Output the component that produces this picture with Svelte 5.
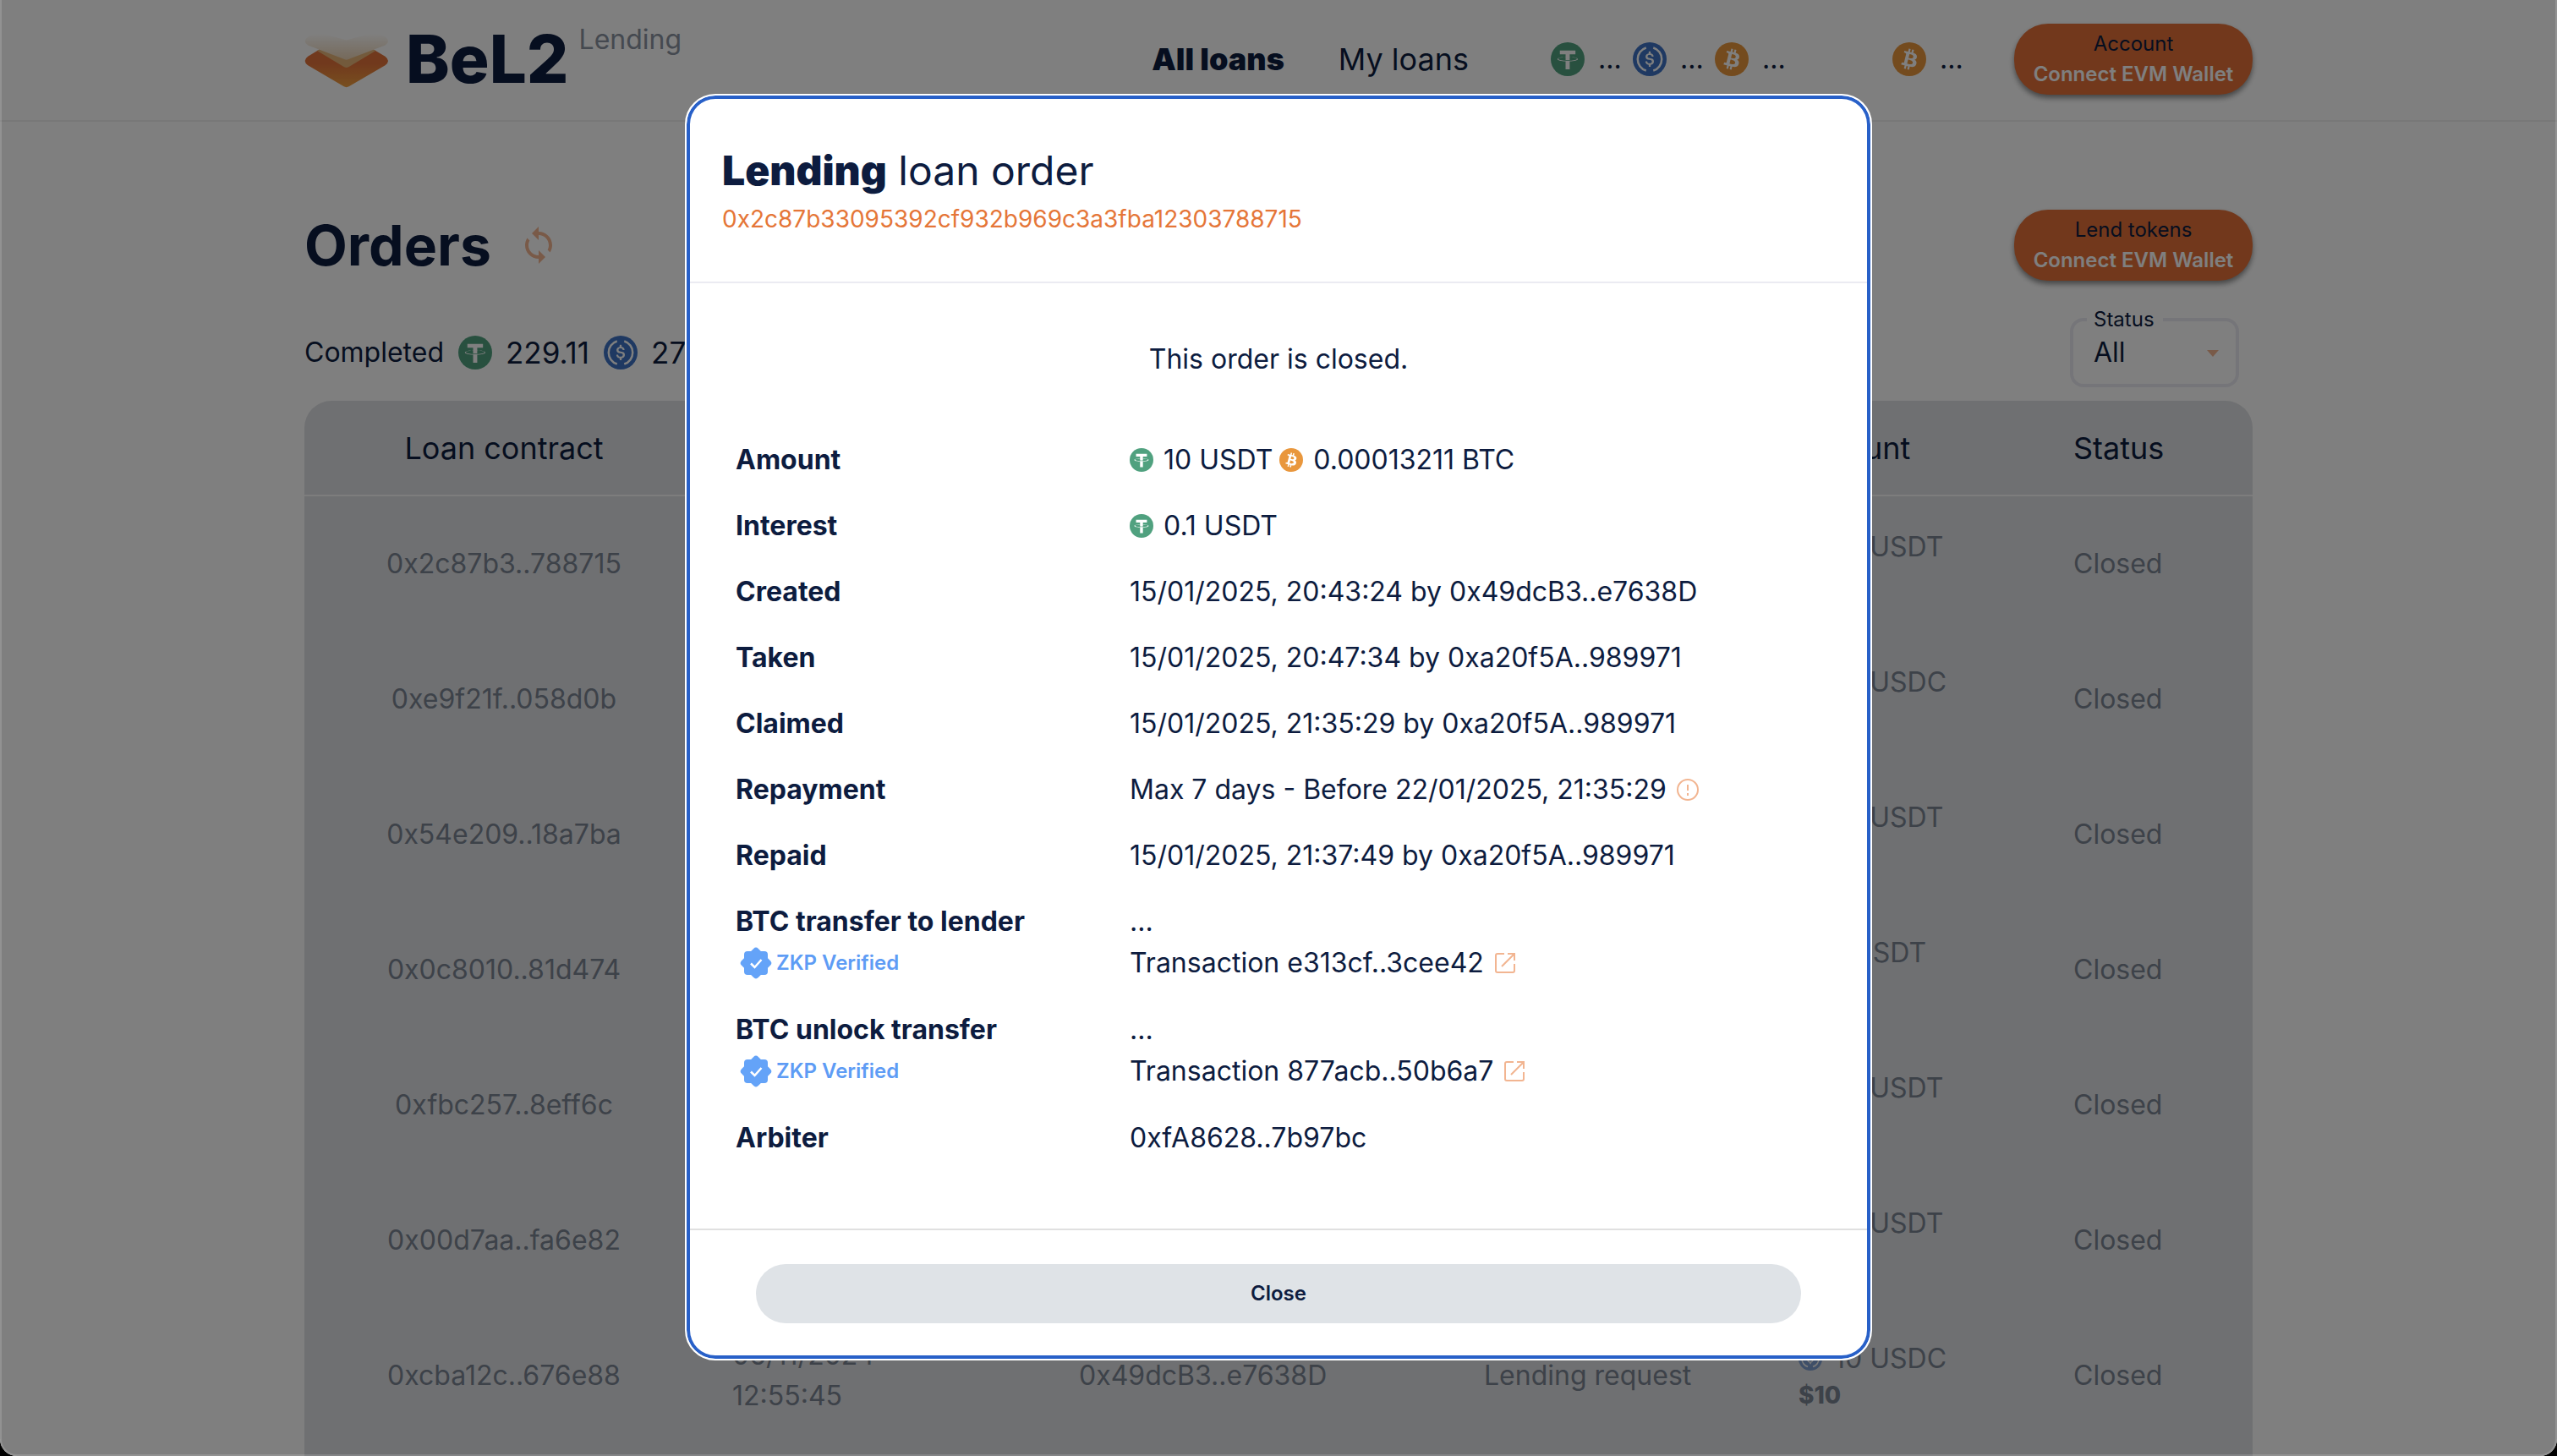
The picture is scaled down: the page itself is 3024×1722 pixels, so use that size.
<script lang="ts">
  interface Order {
    contract: string;
    amount: string;
    token: string;
    date?: string;
    time?: string;
    owner?: string;
    type?: string;
    usd?: string;
  }

  const orders: Order[] = [
    { contract: '0x2c87b3..788715', amount: '10', token: 'USDT' },
    { contract: '0xe9f21f..058d0b', amount: '10', token: 'USDC' },
    { contract: '0x54e209..18a7ba', amount: '10', token: 'USDT' },
    { contract: '0x0c8010..81d474', amount: '1', token: 'USDT' },
    { contract: '0xfbc257..8eff6c', amount: '10', token: 'USDT' },
    { contract: '0x00d7aa..fa6e82', amount: '10', token: 'USDT' },
    {
      contract: '0xcba12c..676e88',
      amount: '10',
      token: 'USDC',
      date: '06/11/2024',
      time: '12:55:45',
      owner: '0x49dcB3..e7638D',
      type: 'Lending request',
      usd: '$10'
    }
  ];

  const events = [
    { label: 'Created', value: '15/01/2025, 20:43:24 by 0x49dcB3..e7638D' },
    { label: 'Taken', value: '15/01/2025, 20:47:34 by 0xa20f5A..989971' },
    { label: 'Claimed', value: '15/01/2025, 21:35:29 by 0xa20f5A..989971' },
    { label: 'Repayment', value: 'Max 7 days - Before 22/01/2025, 21:35:29', info: true },
    { label: 'Repaid', value: '15/01/2025, 21:37:49 by 0xa20f5A..989971' }
  ];

  const transfers = [
    { label: 'BTC transfer to lender', tx: 'e313cf..3cee42' },
    { label: 'BTC unlock transfer', tx: '877acb..50b6a7' }
  ];
</script>

{#snippet coin(kind: string)}
  <svg class="coin" viewBox="0 0 32 32" aria-hidden="true">
    {#if kind === 'USDT'}
      <circle cx="16" cy="16" r="16" fill="#50a17f" />
      <path fill="#fff" d="M17.922 17.383v-.002c-.11.008-.677.042-1.942.042-1.01 0-1.721-.03-1.971-.042v.003c-3.888-.171-6.79-.848-6.79-1.658 0-.809 2.902-1.486 6.79-1.66v2.644c.254.018.982.061 1.988.061 1.207 0 1.812-.05 1.925-.06v-2.643c3.88.173 6.775.85 6.775 1.658 0 .81-2.895 1.485-6.775 1.657m0-3.59v-2.366h5.414V7.819H8.595v3.608h5.414v2.365c-4.4.202-7.709 1.074-7.709 2.118 0 1.044 3.309 1.915 7.709 2.118v7.582h3.913v-7.584c4.393-.202 7.694-1.073 7.694-2.116 0-1.043-3.301-1.914-7.694-2.117" />
    {:else if kind === 'USDC'}
      <circle cx="16" cy="16" r="16" fill="#3e73c4" />
      <g fill="none" stroke="#fff" stroke-width="2">
        <path d="M12.6 5.2a11.3 11.3 0 0 0 0 21.6M19.4 5.2a11.3 11.3 0 0 1 0 21.6" />
      </g>
      <path fill="#fff" d="M20.022 18.124c0-2.124-1.28-2.852-3.84-3.156-1.828-.243-2.193-.728-2.193-1.578 0-.85.61-1.396 1.828-1.396 1.097 0 1.707.364 2.011 1.275a.458.458 0 0 0 .427.303h.975a.416.416 0 0 0 .427-.425v-.06a3.04 3.04 0 0 0-2.743-2.489V9.142c0-.243-.183-.425-.487-.486h-.915c-.243 0-.426.182-.487.486v1.396c-1.829.242-2.986 1.456-2.986 2.974 0 2.002 1.218 2.791 3.778 3.095 1.707.303 2.255.668 2.255 1.639 0 .97-.853 1.638-2.011 1.638-1.585 0-2.133-.667-2.316-1.578-.06-.242-.244-.364-.427-.364h-1.036a.416.416 0 0 0-.426.425v.06c.243 1.518 1.219 2.61 3.23 2.914v1.457c0 .242.183.425.487.485h.915c.243 0 .426-.182.487-.485V21.34c1.829-.303 3.047-1.578 3.047-3.216z" />
    {:else}
      <circle cx="16" cy="16" r="16" fill="#e9973d" />
      <path fill="#fff" d="M23.189 14.02c.314-2.096-1.283-3.223-3.465-3.975l.708-2.84-1.728-.43-.69 2.765c-.454-.114-.92-.22-1.385-.326l.695-2.783L15.596 6l-.708 2.839c-.376-.086-.746-.17-1.104-.26l.002-.009-2.384-.595-.46 1.846s1.283.294 1.256.312c.7.175.826.638.805 1.006l-.806 3.235c.048.012.11.03.18.057l-.183-.045-1.13 4.532c-.086.212-.303.531-.793.41.018.025-1.256-.313-1.256-.313l-.858 1.978 2.25.561c.418.105.828.215 1.231.318l-.715 2.872 1.727.43.708-2.84c.472.127.93.245 1.378.357l-.706 2.828 1.728.43.715-2.866c2.948.558 5.164.333 6.097-2.333.752-2.146-.037-3.385-1.588-4.192 1.13-.26 1.98-1.003 2.207-2.538zm-3.95 5.538c-.533 2.147-4.148.986-5.32.695l.95-3.805c1.172.293 4.929.872 4.37 3.11zm.535-5.569c-.487 1.953-3.495.96-4.47.717l.86-3.45c.975.243 4.118.696 3.61 2.733z" />
    {/if}
  </svg>
{/snippet}

<div class="window">
  <header class="topbar">
    <div class="container bar">
      <a class="brand" href="#home">
        <svg class="mark" viewBox="0 0 300 200" aria-hidden="true">
          <defs>
            <linearGradient id="base" x1="0" y1="0" x2="0" y2="1">
              <stop offset="0.4" stop-color="#e3733a" />
              <stop offset="1" stop-color="#f0a040" />
            </linearGradient>
            <linearGradient id="fade" x1="0" y1="0" x2="0" y2="1">
              <stop offset="0" stop-color="#fff" />
              <stop offset="1" stop-color="#ecd3b4" />
            </linearGradient>
          </defs>
          <path fill="url(#base)" d="M56 57Q65 52 74 57L149 98L224 57Q233 52 242 57L288 84Q309 100 288 116L158 192Q149 197 140 192L11 116Q-10 100 11 84Z" />
          <path fill="#e6b478" d="M44 64L56 57Q65 52 74 57L149 94L224 57Q233 52 242 57L254 64L157 122Q149 127 141 122Z" />
          <path fill="url(#fade)" d="M11 14Q40 -4 70 4L149 26L228 4Q258 -4 288 14Q309 30 288 44L157 94Q149 99 141 94L11 44Q-10 30 11 14Z" />
        </svg>
        <span class="name">BeL2</span>
        <span class="product">Lending</span>
      </a>
      <nav class="nav">
        <a class="active" href="#all">All loans</a>
        <a href="#mine">My loans</a>
      </nav>
      <div class="tokens">
        <span class="token">{@render coin('USDT')}<span>...</span></span>
        <span class="token">{@render coin('USDC')}<span>...</span></span>
        <span class="token">{@render coin('BTC')}<span>...</span></span>
      </div>
      <span class="token wallet">{@render coin('BTC')}<span>...</span></span>
      <button class="cta"><span>Account</span><strong>Connect EVM Wallet</strong></button>
    </div>
  </header>

  <main class="container">
    <div class="heading">
      <h1>Orders</h1>
      <button class="refresh" aria-label="Refresh">
        <svg viewBox="0 0 24 24"><path d="M12 4V1L8 5l4 4V6c3.31 0 6 2.69 6 6 0 1.01-.25 1.97-.7 2.8l1.46 1.46C19.54 15.03 20 13.57 20 12c0-4.42-3.58-8-8-8m0 14c-3.31 0-6-2.69-6-6 0-1.01.25-1.97.7-2.8L5.24 7.74C4.46 8.97 4 10.43 4 12c0 4.42 3.58 8 8 8v3l4-4-4-4z" /></svg>
      </button>
      <button class="cta end"><span>Lend tokens</span><strong>Connect EVM Wallet</strong></button>
    </div>

    <div class="summary">
      <span>Completed</span>
      <span class="total">{@render coin('USDT')}<span>229.11</span></span>
      <span class="total">{@render coin('USDC')}<span>27</span></span>
      <div class="filter">
        <label for="status">Status</label>
        <select id="status"><option>All</option><option>Closed</option></select>
        <svg class="caret" viewBox="0 0 14 8" aria-hidden="true"><path d="M0 0h14L7 8z" /></svg>
      </div>
    </div>

    <div class="sheet">
      <table class="orders">
        <thead>
          <tr>
            <th class="c-contract">Loan contract</th>
            <th class="c-date"></th>
            <th class="c-owner"></th>
            <th class="c-type"></th>
            <th class="c-amount">Amount</th>
            <th>Status</th>
          </tr>
        </thead>
        <tbody>
          {#each orders as o}
            <tr>
              <td class="c-contract">{o.contract}</td>
              <td>{o.date ?? ''}<br />{o.time ?? ''}</td>
              <td>{o.owner ?? ''}</td>
              <td>{o.type ?? ''}</td>
              <td>
                <span class="sum">{@render coin(o.token)}{o.amount} {o.token}</span>
                <strong class="usd">{o.usd ?? ''}</strong>
              </td>
              <td>Closed</td>
            </tr>
          {/each}
        </tbody>
      </table>
    </div>
  </main>

  <div class="overlay">
    <div class="dialog" role="dialog" aria-modal="true" aria-labelledby="dialog-title">
      <div class="dialog-head">
        <h2 id="dialog-title"><strong>Lending</strong> loan order</h2>
        <a href="#contract">0x2c87b33095392cf932b969c3a3fba12303788715</a>
      </div>
      <div class="dialog-body">
        <p>This order is closed.</p>
        <table class="details">
          <tbody>
            <tr>
              <th scope="row">Amount</th>
              <td>
                <span class="line">
                  <span class="value">{@render coin('USDT')}10 USDT</span>
                  <span class="value">{@render coin('BTC')}0.00013211 BTC</span>
                </span>
              </td>
            </tr>
            <tr>
              <th scope="row">Interest</th>
              <td><span class="value">{@render coin('USDT')}0.1 USDT</span></td>
            </tr>
            {#each events as e}
              <tr>
                <th scope="row">{e.label}</th>
                <td>
                  <span class="value">{e.value}
                    {#if e.info}
                      <svg class="hint" viewBox="0 0 26 26" aria-hidden="true"><circle cx="13" cy="13" r="12" /><path d="M13 7v7M13 17v3" /></svg>
                    {/if}
                  </span>
                </td>
              </tr>
            {/each}
            {#each transfers as t}
              <tr>
                <th scope="row">
                  {t.label}
                  <span class="verified">
                    <svg viewBox="0 0 40 40" aria-hidden="true">
                      <g fill="#64a3f8">
                        <rect x="6" y="6" width="28" height="28" rx="4" />
                        <rect x="6" y="6" width="28" height="28" rx="4" transform="rotate(45 20 20)" />
                      </g>
                      <path d="M14 20.500l4.500 4.500 8-9" fill="none" stroke="#fff" stroke-width="2.500" />
                    </svg>ZKP Verified
                  </span>
                </th>
                <td>
                  ...
                  <span class="value tx">Transaction {t.tx}
                    <a href="#tx" aria-label="Open transaction">
                      <svg class="hint" viewBox="0 0 26 26"><path d="M12 2H4a2 2 0 0 0-2 2v18a2 2 0 0 0 2 2h18a2 2 0 0 0 2-2v-8M16 2h8v8M24 2L9 17" /></svg>
                    </a>
                  </span>
                </td>
              </tr>
            {/each}
            <tr>
              <th scope="row">Arbiter</th>
              <td>0xfA8628..7b97bc</td>
            </tr>
          </tbody>
        </table>
      </div>
      <div class="dialog-foot">
        <button>Close</button>
      </div>
    </div>
  </div>
</div>

<style>
  :global(body) {
    background: #000;
  }
  .window {
    position: relative;
    display: flex;
    flex-direction: column;
    height: 100vh;
    overflow: hidden;
    background: #fff;
    border-radius: 0 0 20px 20px;
    color: #0d1c3f;
    font-family: Inter, 'Liberation Sans', sans-serif;
    font-size: 32px;
    line-height: 48px;
  }
  a {
    color: inherit;
    text-decoration: none;
  }
  button {
    border: 0;
    color: inherit;
    font: inherit;
    cursor: pointer;
  }
  .container {
    width: 2304px;
    max-width: 94%;
    margin: 0 auto;
  }
  .coin {
    flex: none;
    width: 40px;
    height: 40px;
  }

  .topbar {
    flex: none;
    border-bottom: 2px solid #f0f0f0;
  }
  .bar {
    display: flex;
    align-items: center;
    height: 140px;
    padding-bottom: 2px;
  }
  .brand {
    display: flex;
    align-items: flex-start;
    margin-right: auto;
  }
  .mark {
    width: 100px;
    height: 66px;
    margin: 4px 20px 0 0;
  }
  .name {
    font-size: 78px;
    font-weight: 800;
    line-height: 70px;
  }
  .product {
    margin-left: 12px;
    color: #8a93a0;
    font-size: 32px;
    line-height: 24px;
  }
  .nav {
    display: flex;
    gap: 64px;
    margin-right: 97px;
    font-size: 36px;
  }
  .active {
    font-weight: 900;
  }
  .tokens {
    display: flex;
    gap: 17px;
    margin-right: 130px;
  }
  .token {
    display: flex;
    align-items: center;
    gap: 16px;
    width: 80px;
  }
  .wallet {
    margin-right: 64px;
  }
  .cta {
    display: flex;
    flex-direction: column;
    align-items: center;
    justify-content: center;
    width: 282px;
    height: 84px;
    padding: 0;
    border-radius: 40px;
    background: #e57138;
    box-shadow: 0 4px 6px rgba(0, 0, 0, 0.45);
    font-size: 24px;
    line-height: 36px;
    white-space: nowrap;
  }
  .cta strong {
    color: #fff;
    font-weight: 600;
  }
  .end {
    margin-left: auto;
  }

  main {
    display: flex;
    flex: 1;
    flex-direction: column;
    min-height: 0;
  }
  .heading {
    display: flex;
    flex: none;
    align-items: center;
    margin-top: 104px;
  }
  h1 {
    margin: 0;
    font-size: 66px;
    font-weight: 700;
    line-height: 84px;
  }
  .refresh {
    display: flex;
    margin-left: 32px;
    padding: 0;
    background: none;
  }
  .refresh svg {
    width: 48px;
    height: 48px;
    fill: #f2b591;
  }
  .summary {
    display: flex;
    flex: none;
    align-items: center;
    gap: 17px;
    height: 82px;
    margin-top: 44px;
  }
  .total {
    display: flex;
    align-items: center;
    gap: 16px;
    font-size: 35px;
  }
  .filter {
    position: relative;
    width: 200px;
    height: 82px;
    margin: 0 16px 0 auto;
  }
  .filter label {
    position: absolute;
    top: -16px;
    left: 20px;
    padding: 0 10px 0 8px;
    background: #fff;
    font-size: 24px;
    line-height: 36px;
  }
  .filter select {
    width: 100%;
    height: 100%;
    padding: 0 24px;
    appearance: none;
    border: 4px solid #ebebf2;
    border-radius: 16px;
    background: #fff;
    color: inherit;
    font: inherit;
  }
  .caret {
    position: absolute;
    top: 38px;
    right: 24px;
    width: 14px;
    height: 8px;
    fill: #f2b591;
  }

  .sheet {
    flex: 1;
    min-height: 0;
    margin-top: 16px;
    overflow: hidden;
    border-radius: 32px 32px 0 0;
    background: #dfe1e4;
  }
  .orders {
    width: 100%;
    table-layout: fixed;
    border-collapse: collapse;
    text-align: left;
  }
  .orders th {
    height: 111px;
    padding: 0;
    border-bottom: 2px solid #fbfbfb;
    font-size: 36px;
    font-weight: 400;
  }
  .orders td {
    height: 160px;
    padding: 0;
    color: #7b8493;
  }
  .orders .c-contract {
    width: 472px;
    padding-right: 34px;
    text-align: center;
  }
  .c-date {
    width: 410px;
  }
  .c-owner {
    width: 479px;
  }
  .c-type {
    width: 372px;
  }
  .c-amount {
    width: 325px;
  }
  .sum {
    display: flex;
    align-items: center;
    gap: 14px;
    line-height: 46px;
  }
  .sum .coin,
  .details .coin {
    width: 28px;
    height: 28px;
  }
  .sum .coin {
    opacity: 0.6;
  }
  .usd {
    display: block;
    height: 40px;
    font-size: 28px;
    font-weight: 800;
    line-height: 40px;
  }

  .overlay {
    position: absolute;
    inset: 0;
    display: flex;
    align-items: center;
    justify-content: center;
    border: 2px solid rgba(255, 255, 255, 0.15);
    border-top: 0;
    border-radius: 0 0 20px 20px;
    background: rgba(0, 0, 0, 0.5);
  }
  .dialog {
    box-sizing: border-box;
    width: 1404px;
    max-width: 94%;
    padding: 4px;
    border: 2px solid #fff;
    border-radius: 36px;
    background: #fff;
    box-shadow: inset 0 0 0 4px #2860c8;
  }
  .dialog-head {
    padding: 53px 38px 54px;
    border-bottom: 2px solid #ebebf2;
  }
  h2 {
    margin: 0 0 5px;
    font-size: 48px;
    font-weight: 400;
    line-height: 64px;
  }
  h2 strong {
    font-weight: 900;
  }
  .dialog-head a {
    display: block;
    color: #e57638;
    font-size: 28px;
    line-height: 40px;
  }
  .dialog-body {
    padding: 66px 54px 68px;
  }
  p {
    margin: 0 0 56px;
    text-align: center;
  }
  .details {
    width: 100%;
    border-collapse: collapse;
    text-align: left;
  }
  .details th,
  .details td {
    padding: 15px 0;
    vertical-align: top;
  }
  .details th {
    width: 466px;
    font-weight: 700;
  }
  .line,
  .value {
    display: flex;
    align-items: center;
    gap: 12px;
  }
  .line {
    gap: 8px;
  }
  .tx {
    height: 50px;
  }
  .value a {
    display: flex;
  }
  .hint {
    flex: none;
    width: 26px;
    height: 26px;
    fill: none;
    stroke: #f2b591;
    stroke-width: 2;
  }
  .verified {
    display: flex;
    align-items: center;
    gap: 4px;
    height: 50px;
    padding-left: 4px;
    color: #5e9cf5;
    font-size: 24px;
    font-weight: 600;
  }
  .verified svg {
    width: 40px;
    height: 40px;
  }
  .dialog-foot {
    padding: 40px 78px 38px;
    border-top: 2px solid #e0e0e0;
  }
  .dialog-foot button {
    display: block;
    width: 100%;
    height: 70px;
    border-radius: 35px;
    background: #dfe3e7;
    font-size: 24px;
    font-weight: 600;
  }
</style>
